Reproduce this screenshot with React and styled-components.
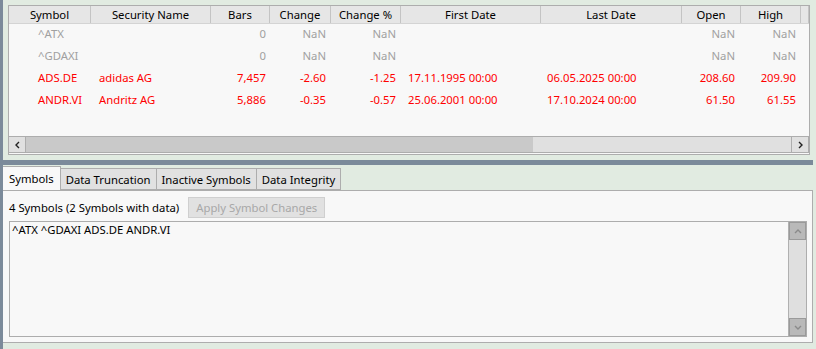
import React from "react"
import styled, { createGlobalStyle } from "styled-components"

const GlobalStyle = createGlobalStyle`
  html, body {
    margin: 0;
    padding: 0;
    background: #e1ebe1;
  }
  body {
    font-family: "Noto Sans", "Open Sans", sans-serif;
    font-size: 11.3px;
    color: #000;
  }
`

const columns = [
  { key: "sym", title: "Symbol", width: 82, align: "left", pad: "0 0 0 29px" },
  { key: "name", title: "Security Name", width: 120, align: "left", pad: "0 0 0 8px" },
  { key: "bars", title: "Bars", width: 59, align: "right", pad: "0 4px 0 0" },
  { key: "change", title: "Change", width: 61, align: "right", pad: "0 5px 0 0" },
  { key: "pct", title: "Change %", width: 70, align: "right", pad: "0 5px 0 0" },
  { key: "first", title: "First Date", width: 140, align: "left", pad: "0 0 0 7px" },
  { key: "last", title: "Last Date", width: 141, align: "left", pad: "0 0 0 6px" },
  { key: "open", title: "Open", width: 59, align: "right", pad: "0 6px 0 0" },
  { key: "high", title: "High", width: 60, align: "right", pad: "0 5px 0 0" },
]

const rows = [
  { sym: "^ATX", name: "", bars: "0", change: "NaN", pct: "NaN", first: "", last: "", open: "NaN", high: "NaN", muted: true },
  { sym: "^GDAXI", name: "", bars: "0", change: "NaN", pct: "NaN", first: "", last: "", open: "NaN", high: "NaN", muted: true },
  { sym: "ADS.DE", name: "adidas AG", bars: "7,457", change: "-2.60", pct: "-1.25", first: "17.11.1995 00:00", last: "06.05.2025 00:00", open: "208.60", high: "209.90" },
  { sym: "ANDR.VI", name: "Andritz AG", bars: "5,886", change: "-0.35", pct: "-0.57", first: "25.06.2001 00:00", last: "17.10.2024 00:00", open: "61.50", high: "61.55" },
]

const tabs = ["Symbols", "Data Truncation", "Inactive Symbols", "Data Integrity"]

const gridTemplate = columns.map((c) => c.width + "px").join(" ") + " 1fr"

const Page = styled.div`
  width: 816px;
  height: 349px;
  display: flex;
  background: #e1ebe1;
  overflow: hidden;
`

const SideSplitter = styled.div`
  width: 3px;
  background: #7b8a9a;
  flex-shrink: 0;
`

const Main = styled.div`
  flex: 1;
  display: flex;
  flex-direction: column;
`

const TopPane = styled.div`
  padding: 5px 6px 0 5px;
`

const GridFrame = styled.div`
  height: 150px;
  box-sizing: border-box;
  border: 1px solid #adadad;
  background: #f8f8f8;
  display: flex;
  flex-direction: column;
`

const GridBody = styled.div`
  flex: 1;
  overflow: hidden;
`

const HeaderRow = styled.div`
  display: grid;
  grid-template-columns: ${gridTemplate};
  height: 17px;
  background: #e6e6e6;
  border-bottom: 1px solid #d4d4d4;
`

const HeaderCell = styled.div`
  border-right: 1px solid #c4c4c4;
  text-align: center;
  line-height: 17px;
  white-space: nowrap;
  overflow: hidden;
`

const DataRow = styled.div`
  display: grid;
  grid-template-columns: ${gridTemplate};
  height: 22px;
  color: ${(p) => (p.$muted ? "#a0a0a0" : "#ff0000")};
`

const Cell = styled.div`
  line-height: 20px;
  white-space: nowrap;
  overflow: hidden;
  text-align: ${(p) => p.$align};
  padding: ${(p) => p.$pad};
`

const HScroll = styled.div`
  height: 17px;
  box-sizing: border-box;
  margin: 0 0 1px 0;
  border: 1px solid #adadad;
  border-left: none;
  display: flex;
  background: #e0e0e0;
`

const ArrowButton = styled.div`
  width: 16px;
  flex-shrink: 0;
  display: flex;
  align-items: center;
  justify-content: center;
  background: #e0e0e0;
  border-left: ${(p) => (p.$side === "right" ? "1px solid #adadad" : "none")};
  border-right: ${(p) => (p.$side === "left" ? "1px solid #adadad" : "none")};
`

const Track = styled.div`
  flex: 1;
  display: flex;
`

const Thumb = styled.div`
  width: 507px;
  background: #c9c9c9;
`

const Splitter = styled.div`
  height: 5px;
  margin: 5px 3px 0 0;
  background: #7b8a9a;
`

const TabArea = styled.div`
  margin: 2px 3px 0 0;
  display: flex;
  flex-direction: column;
`

const TabStrip = styled.div`
  display: flex;
  height: 23px;
  align-items: flex-end;
  position: relative;
  z-index: 1;
`

const Tab = styled.div`
  box-sizing: border-box;
  height: ${(p) => (p.$active ? "24px" : "22px")};
  padding: 0 ${(p) => (p.$active ? "6px" : "5px")} 0 ${(p) => (p.$active ? "6px" : "5px")};
  line-height: ${(p) => (p.$active ? "23px" : "21px")};
  background: ${(p) => (p.$active ? "#f8f8f8" : "#e1e1e1")};
  border: 1px solid #adadad;
  border-bottom: ${(p) => (p.$active ? "none" : "1px solid #adadad")};
  border-left: ${(p) => (p.$active ? "none" : "1px solid #adadad")};
  margin-left: ${(p) => (p.$first ? "0" : "-1px")};
  white-space: nowrap;
`

const TabPanel = styled.div`
  height: 153px;
  box-sizing: border-box;
  border: 1px solid #adadad;
  border-left: none;
  background: #f8f8f8;
  padding: 6px 5px 5px 5px;
  display: flex;
  flex-direction: column;
  gap: 3px;
`

const Toolbar = styled.div`
  display: flex;
  align-items: center;
  gap: 9px;
  height: 21px;
`

const StatusText = styled.span`
  padding-left: 1px;
`

const DisabledButton = styled.div`
  height: 21px;
  box-sizing: border-box;
  padding: 0 7px;
  line-height: 19px;
  background: #e1e1e1;
  border: 1px solid #cfcfcf;
  color: #a8a8a8;
`

const TextBox = styled.div`
  flex: 1;
  margin-left: 1px;
  border: 1px solid #adadad;
  background: #f8f8f8;
  display: flex;
`

const TextContent = styled.div`
  flex: 1;
  padding: 0 2px;
  line-height: 16px;
`

const VScroll = styled.div`
  width: 17px;
  display: flex;
  flex-direction: column;
  background: #dfdfdf;
  border-left: 1px solid #b0b0b0;
`

const VButton = styled.div`
  height: 16px;
  background: #b9b9b9;
  border: 1px solid #9a9a9a;
  display: flex;
  align-items: center;
  justify-content: center;
`

const VTrack = styled.div`
  flex: 1;
`

const Chevron = ({ dir, color = "#222" }) => {
  const pts = {
    left: "5,2 2,5 5,8",
    right: "2,2 5,5 2,8",
    up: "1,5 4,2 7,5",
    down: "1,2 4,5 7,2",
  }[dir]
  const horiz = dir === "left" || dir === "right"
  return (
    <svg width={horiz ? 7 : 8} height={horiz ? 10 : 7} viewBox={horiz ? "0 0 7 10" : "0 0 8 7"}>
      <polyline points={pts} fill="none" stroke={color} strokeWidth="1.4" />
    </svg>
  )
}

function SymbolGrid() {
  return (
    <GridFrame>
      <GridBody>
        <HeaderRow>
          {columns.map((c) => (
            <HeaderCell key={c.key}>{c.title}</HeaderCell>
          ))}
          <HeaderCell />
        </HeaderRow>
        {rows.map((r) => (
          <DataRow key={r.sym} $muted={r.muted}>
            {columns.map((c) => (
              <Cell key={c.key} $align={c.align} $pad={c.pad}>
                {r[c.key]}
              </Cell>
            ))}
            <Cell />
          </DataRow>
        ))}
      </GridBody>
      <HScroll>
        <ArrowButton $side="left">
          <Chevron dir="left" />
        </ArrowButton>
        <Track>
          <Thumb />
        </Track>
        <ArrowButton $side="right">
          <Chevron dir="right" />
        </ArrowButton>
      </HScroll>
    </GridFrame>
  )
}

export default function App() {
  return (
    <Page>
      <GlobalStyle />
      <SideSplitter />
      <Main>
        <TopPane>
          <SymbolGrid />
        </TopPane>
        <Splitter />
        <TabArea>
          <TabStrip>
            {tabs.map((t, i) => (
              <Tab key={t} $active={i === 0} $first={i === 0}>
                {t}
              </Tab>
            ))}
          </TabStrip>
          <TabPanel>
            <Toolbar>
              <StatusText>4 Symbols (2 Symbols with data)</StatusText>
              <DisabledButton>Apply Symbol Changes</DisabledButton>
            </Toolbar>
            <TextBox>
              <TextContent>^ATX ^GDAXI ADS.DE ANDR.VI</TextContent>
              <VScroll>
                <VButton>
                  <Chevron dir="up" color="#8a8a8a" />
                </VButton>
                <VTrack />
                <VButton>
                  <Chevron dir="down" color="#8a8a8a" />
                </VButton>
              </VScroll>
            </TextBox>
          </TabPanel>
        </TabArea>
      </Main>
    </Page>
  )
}
